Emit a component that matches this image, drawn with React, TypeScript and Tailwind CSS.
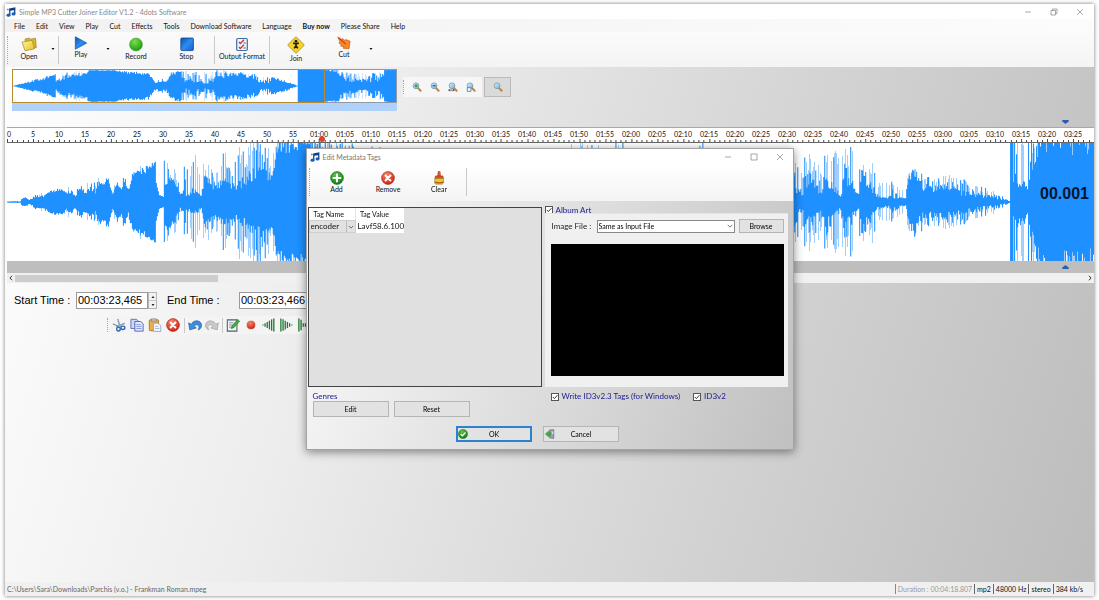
import React from "react";

const UI = "font-[Lato,'Noto_Sans',sans-serif]";
const ARIAL = "font-['Liberation_Sans',Arial,sans-serif]";

/* ---------- wave forms ---------- */

// [position, lowest body, highest body, chance of a peak, peak height], heights from 0 to 100
type Stop = [number, number, number, number, number];

const MAIN: Stop[] = [
  [0, 1, 1, 0, 1], [13, 1, 2, 0, 2], [15, 5, 8, 0, 8], [18, 6, 8, 0, 8], [22, 3, 5, 0.1, 6],
  [28, 7, 11, 0.4, 14], [36, 8, 13, 0.4, 18], [42, 15, 20, 0.2, 22], [55, 20, 24, 0.2, 25],
  [59, 10, 16, 0.5, 28], [63, 15, 22, 0.4, 30], [68, 8, 12, 0.4, 22], [74, 22, 30, 0.4, 36],
  [77, 12, 18, 0.4, 32], [83, 20, 26, 0.5, 38], [88, 14, 20, 0.4, 36], [93, 30, 40, 0.3, 43],
  [97, 26, 32, 0.4, 42], [101, 36, 42, 0.4, 46], [105, 10, 14, 0.2, 26], [110, 26, 34, 0.4, 44],
  [114, 20, 24, 0.4, 38], [117, 34, 42, 0.5, 52], [121, 15, 24, 0.3, 38], [125, 40, 50, 0.5, 56],
  [131, 46, 56, 0.7, 60], [140, 48, 62, 0.7, 64], [147, 64, 68, 0.5, 68], [148, 67, 69, 0, 69],
  [149, 30, 32, 0, 30], [152, 10, 12, 0, 14], [156, 8, 10, 0.1, 14], [157, 20, 50, 0.6, 76],
  [163, 36, 44, 0.6, 68], [168, 26, 36, 0.6, 66], [173, 9, 14, 0.3, 40], [176, 14, 20, 0.4, 60],
  [177, 40, 70, 0.9, 86], [179, 10, 14, 0.4, 50], [186, 12, 26, 0.6, 88], [190, 12, 20, 0.4, 76],
  [194, 8, 14, 0.3, 50], [198, 34, 56, 0.6, 84], [204, 20, 34, 0.5, 70], [211, 18, 36, 0.5, 66],
  [217, 26, 44, 0.7, 110], [224, 18, 32, 0.5, 66], [230, 20, 36, 0.6, 100], [238, 26, 46, 0.6, 84],
  [246, 36, 60, 0.6, 110], [256, 36, 60, 0.6, 110], [264, 36, 50, 0.6, 84], [268, 64, 90, 0.7, 110],
  [274, 80, 110, 0.7, 120], [300, 90, 110, 0.6, 120], [345, 70, 100, 0.5, 100], [350, 40, 70, 0.4, 97],
  [420, 30, 80, 0.2, 90], [560, 30, 80, 0.2, 90], [568, 40, 90, 0.5, 104], [630, 50, 90, 0.3, 104],
  [634, 40, 80, 0.2, 90], [714, 40, 80, 0.4, 104], [738, 40, 80, 0.2, 90], [780, 20, 40, 0.5, 84],
  [786, 20, 46, 0.6, 84], [796, 8, 16, 0.4, 54], [799, 24, 60, 0.7, 94], [808, 22, 44, 0.6, 80],
  [814, 10, 16, 0.4, 54], [818, 26, 64, 0.6, 88], [826, 16, 36, 0.6, 100], [834, 8, 16, 0.4, 70],
  [838, 30, 66, 0.6, 92], [846, 16, 36, 0.6, 94], [852, 8, 14, 0.4, 54], [856, 30, 60, 0.6, 78],
  [866, 12, 30, 0.6, 72], [870, 8, 16, 0.4, 38], [880, 5, 8, 0.4, 38], [886, 6, 22, 0.5, 48],
  [894, 5, 8, 0.3, 28], [899, 5, 8, 0.5, 36], [902, 24, 52, 0.6, 62], [908, 40, 60, 0.4, 60],
  [914, 18, 40, 0.6, 56], [922, 15, 30, 0.6, 52], [940, 14, 30, 0.6, 47], [958, 10, 22, 0.6, 38],
  [975, 7, 16, 0.6, 28], [990, 4, 9, 0.5, 17], [1003, 1, 2, 0.1, 3], [1004, 100, 100, 0, 100],
  [1006, 100, 100, 0, 100], [1007, 22, 50, 0.7, 130], [1016, 20, 40, 0.6, 130], [1021, 18, 36, 0.6, 130],
  [1024, 40, 70, 0.6, 130], [1031, 70, 140, 0.7, 150], [1046, 90, 180, 0.8, 170], [1066, 70, 160, 0.8, 170],
  [1087, 80, 160, 0.8, 170],
];

const OVERVIEW: Stop[] = [
  [0, 1, 2, 0, 2], [14, 18, 26, 0.2, 28], [30, 34, 56, 0.3, 58], [42, 68, 74, 0.2, 74],
  [43, 20, 40, 0.5, 74], [48, 36, 62, 0.6, 84], [62, 44, 80, 0.6, 100], [74, 70, 84, 0.6, 100],
  [76, 94, 100, 0.3, 100], [100, 96, 100, 0.2, 100], [114, 76, 92, 0.4, 92], [136, 66, 86, 0.5, 86],
  [138, 30, 70, 0.4, 70], [142, 20, 34, 0.4, 50], [154, 20, 34, 0.5, 54], [158, 60, 88, 0.4, 96],
  [168, 80, 100, 0.4, 100], [171, 16, 56, 0.6, 98], [186, 12, 56, 0.6, 94], [202, 16, 46, 0.6, 90],
  [205, 46, 84, 0.6, 104], [222, 56, 86, 0.6, 104], [240, 50, 76, 0.6, 88], [248, 20, 50, 0.4, 64],
  [258, 14, 30, 0.4, 54], [260, 44, 60, 0.3, 62], [274, 20, 34, 0.3, 36], [286, 2, 3, 0, 3],
  [287, 100, 100, 0, 100], [312, 100, 100, 0.5, 100], [326, 80, 110, 0.6, 110], [334, 26, 56, 0.7, 90],
  [350, 22, 44, 0.7, 80], [372, 26, 60, 0.7, 90], [374, 96, 100, 0, 100], [385, 100, 100, 0, 100],
];

function buildWave(stops: Stop[], seed: number) {
  let state = seed;
  const rand = () => {
    state = (state * 1664525 + 1013904223) % 4294967296;
    return state / 4294967296;
  };
  const cap = (n: number) => Math.min(100, n);
  let body = "";
  let peaks = "";
  const last = stops[stops.length - 1][0];
  let i = 0;
  for (let x = 0; x <= last; x++) {
    while (i < stops.length - 2 && x >= stops[i + 1][0]) i++;
    const a = stops[i];
    const b = stops[i + 1];
    const t = Math.min(1, (x - a[0]) / (b[0] - a[0]));
    const mix = (n: 1 | 2 | 3 | 4) => a[n] + (b[n] - a[n]) * t;
    const solid = () => cap(mix(1) + (mix(2) - mix(1)) * rand());
    const up = solid();
    const down = solid();
    body += `M${x + 0.5} ${(100 - up).toFixed(1)}V${(100 + down).toFixed(1)}`;
    if (rand() < mix(3)) {
      const reach = 0.6 + 0.4 * rand();
      const p = cap(Math.max(up, mix(4) * reach));
      const q = cap(Math.max(down, mix(4) * (reach - 0.06 + 0.1 * rand())));
      const path = `M${x + 0.5} ${(100 - p).toFixed(1)}V${(100 + q).toFixed(1)}`;
      if (rand() < 0.38) body += path;
      else peaks += path;
    }
  }
  return { body, peaks, width: last + 1 };
}

const mainWave = buildWave(MAIN, 11);
const overviewWave = buildWave(OVERVIEW, 5);

function Wave({ wave, className }: { wave: typeof mainWave; className: string }) {
  return (
    <svg viewBox={`0 0 ${wave.width} 200`} preserveAspectRatio="none" className={className} shapeRendering="crispEdges" aria-hidden="true">
      <path d={wave.peaks} stroke="#84c1fc" strokeWidth="1" />
      <path d={wave.body} stroke="#1e90ff" strokeWidth="1.05" />
    </svg>
  );
}

/* ---------- icons ---------- */

const Defs = () => (
  <svg className="absolute size-0" aria-hidden="true">
    <defs>
      <linearGradient id="blue" x1="0" y1="0" x2="1" y2="1">
        <stop offset="0" stopColor="#0d4fb0" />
        <stop offset=".5" stopColor="#2f8cf0" />
        <stop offset="1" stopColor="#1160c8" />
      </linearGradient>
      <radialGradient id="green" cx=".4" cy=".3" r=".7">
        <stop offset="0" stopColor="#7be04a" />
        <stop offset="1" stopColor="#1f9a14" />
      </radialGradient>
      <radialGradient id="darkgreen" cx=".4" cy=".25" r=".8">
        <stop offset="0" stopColor="#5cc44c" />
        <stop offset="1" stopColor="#0b7a12" />
      </radialGradient>
      <radialGradient id="red" cx=".4" cy=".25" r=".8">
        <stop offset="0" stopColor="#f7866a" />
        <stop offset="1" stopColor="#cc1f10" />
      </radialGradient>
      <linearGradient id="yellow" x1="0" y1="0" x2="1" y2="1">
        <stop offset="0" stopColor="#fff6a0" />
        <stop offset="1" stopColor="#e8c020" />
      </linearGradient>
      <linearGradient id="lens" x1="0" y1="0" x2="1" y2="1">
        <stop offset="0" stopColor="#e4f5fc" />
        <stop offset="1" stopColor="#64b0dc" />
      </linearGradient>
    </defs>
  </svg>
);

function Icon({ className = "size-[14px]", children }: { className?: string; children: React.ReactNode }) {
  return (
    <svg viewBox="0 0 16 16" className={`${className} shrink-0`} fill="none" aria-hidden="true">
      {children}
    </svg>
  );
}

const NoteIcon = () => (
  <Icon className="size-[10px]">
    <path d="M5 2.5 15 .5v10.5h-2V5L7 6v7H5z" fill="#123f86" />
    <ellipse cx="4" cy="13" rx="3.2" ry="2.6" fill="#1d5fb8" />
    <ellipse cx="12" cy="11" rx="3.2" ry="2.6" fill="#1d5fb8" />
    <circle cx="3" cy="4" r="1.6" fill="#4aa0e8" />
  </Icon>
);
const FolderIcon = () => (
  <Icon className="size-[16px]">
    <path d="M4 3 8.500 2l1 1.200 5-1 .8 9.300-10 2.500z" fill="#d9b52c" stroke="#8d741c" strokeWidth=".6" />
    <path d="m1 6 10-1.600 2.500 8.400L4 14.800z" fill="url(#yellow)" stroke="#a58a20" strokeWidth=".7" />
  </Icon>
);
const PlayIcon = () => (
  <Icon>
    <path d="M1.5.8 14.5 8 1.5 15.2z" fill="url(#blue)" stroke="#0b4499" strokeWidth=".7" />
  </Icon>
);
const RecordIcon = () => (
  <Icon className="size-[16px]"><circle cx="8" cy="8.5" r="6.5" fill="url(#green)" stroke="#3c9a2b" strokeWidth=".5" /></Icon>
);
const StopIcon = () => (
  <Icon className="size-[16px]"><rect x="1.8" y="2" width="12.6" height="12.6" rx="1" fill="url(#blue)" stroke="#0b4499" strokeWidth=".8" /></Icon>
);
const FormatIcon = () => (
  <Icon className="size-[16px]">
    <rect x="2.7" y="2.5" width="10.6" height="12" rx="1.2" fill="#eef4fb" stroke="#3b6ea8" strokeWidth="1.2" />
    <path d="m5 6 1.3 1.4L10 3.800M5 11l1.300 1.400L10 8.800" stroke="#d0342a" strokeWidth="1.400" />
    <path d="M9.500 7h2.300M9.500 12h2.300" stroke="#56688c" />
  </Icon>
);
const JoinIcon = () => (
  <Icon className="size-[18px]">
    <rect x="2.700" y="2.700" width="10.600" height="10.600" rx="1" transform="rotate(45 8 8)" fill="#f7d329" stroke="#9c8312" strokeWidth=".6" />
    <circle cx="8" cy="4.600" r="1.200" fill="#222" />
    <path d="M5.400 6.600h5.200M8 6v2.600L6.400 11M8 8.600 9.600 11" stroke="#222" strokeWidth="1.500" />
  </Icon>
);
const CutIcon = () => (
  <Icon>
    <path d="m.8 1 4.400 3L6 2.800l3.200 2.400L10 4l5 2-1.200 8.500L7 14l1-1.800-4-.7 1.200-1.600L2 8l1.600-1z" fill="#f7882a" stroke="#c94f12" strokeWidth=".7" />
    <path d="m2 2.200 8 7" stroke="#c43a1a" strokeWidth="1.200" />
  </Icon>
);
function ZoomIcon({ mark }: { mark?: React.ReactNode }) {
  return (
    <Icon className="size-[10px]">
      <path d="m9.200 9.200 4.600 4.800" stroke="#c8843c" strokeWidth="3.200" strokeLinecap="round" />
      <circle cx="6.400" cy="6" r="4.600" fill="url(#lens)" stroke="#7f97aa" strokeWidth="1.300" />
      {mark}
    </Icon>
  );
}
const ScissorsIcon = () => (
  <Icon>
    <path d="M6.500 1 9 9.500M14.500 6 5 10.200" stroke="#8fa2b4" strokeWidth="1.800" />
    <path d="M1 6.500 8 10" stroke="#7d8b99" strokeWidth="1.400" />
    <ellipse cx="7.400" cy="12.600" rx="2" ry="2.200" stroke="#2868b8" strokeWidth="1.600" />
    <ellipse cx="12.400" cy="11.200" rx="2.300" ry="1.900" stroke="#2868b8" strokeWidth="1.600" />
  </Icon>
);
const CopyIcon = () => (
  <Icon>
    <path d="M1 1.500h6.500l2.500 2.500v8H1z" fill="#ccd6f8" stroke="#5b6cb0" />
    <path d="M5.500 4h6.800L15 6.700V15H5.500z" fill="#e2e8fd" stroke="#4a5ca8" />
    <path d="M7.200 7.500h5M7.200 9.700h6M7.200 12h6" stroke="#7c92d8" />
  </Icon>
);
const PasteIcon = () => (
  <Icon>
    <rect x="1.500" y="2" width="10.500" height="12.500" rx="1" fill="#eab04c" stroke="#a8741c" />
    <rect x="4" y="1" width="5.400" height="2.600" fill="#b9bec8" stroke="#777" strokeWidth=".6" />
    <path d="M6.200 6h5.600l2.800 2.700v6.600H6.200z" fill="#f4f7ff" stroke="#8090b8" strokeWidth=".8" />
    <path d="M8 9.500h4M8 12h5" stroke="#a0b0d8" />
  </Icon>
);
const RemoveIcon = ({ className }: { className?: string }) => (
  <Icon className={className}>
    <circle cx="8" cy="8" r="7.300" fill="url(#red)" stroke="#a01a10" strokeWidth=".7" />
    <path d="m5.200 5.200 5.600 5.600m0-5.600-5.600 5.600" stroke="#fff" strokeWidth="2.200" strokeLinecap="round" />
  </Icon>
);
const AddIcon = () => (
  <Icon>
    <circle cx="8" cy="8" r="7.300" fill="url(#darkgreen)" stroke="#0a6410" strokeWidth=".7" />
    <path d="M8 4v8M4 8h8" stroke="#fff" strokeWidth="2.400" strokeLinecap="round" />
  </Icon>
);
const BrushIcon = () => (
  <Icon>
    <path d="M7 .6h2.200l.6 5H6.400z" fill="#e0603a" stroke="#a83c20" strokeWidth=".6" />
    <path d="M4 5.600h8.400l.8 3H3.200z" fill="#d94f2c" stroke="#98341c" strokeWidth=".6" />
    <path d="M3.200 8.600h10v5l-1.600 1.400H4L3 13.600z" fill="#efc52e" stroke="#a17a14" strokeWidth=".7" />
    <path d="M3.400 12.600c3 1.200 6.600 1.200 9.600 0" stroke="#a4581c" strokeWidth="1.300" />
  </Icon>
);
const UndoArrow = ({ color, edge }: { color: string; edge: string }) => (
  <path d="M.8 5.500 2 13.500l7.500-2.200-2.300-1.600c1.200-2.700 4.700-2.500 5.300.1.300 1.500-.2 2.700-1 3.800 2.800-.9 4.300-3.200 3.900-6C14.600 2.600 7 1.200 3.600 7.300z" fill={color} stroke={edge} strokeWidth=".8" />
);
const EditIcon = () => (
  <Icon>
    <path d="M1.500 2h11v13h-11z" fill="#f2f4f8" stroke="#535c6c" strokeWidth="1.200" />
    <path d="M3.500 5.500h5M3.500 8h4M3.500 10.500h3M1.500 2.500h11" stroke="#7a869c" />
    <path d="m6 12 1-3.200 6.400-7L15.600 3.800 9 11z" fill="#3fae3a" stroke="#1c7420" strokeWidth=".7" />
  </Icon>
);
const Bars = ({ heights }: { heights: number[] }) => (
  <Icon>
    {heights.map((h, i) => (
      <path key={i} d={`M${i * 2.5 + 1} ${8 - h}V${8 + h}`} stroke="#1f7a34" strokeWidth="1.500" />
    ))}
  </Icon>
);
const OkIcon = () => (
  <Icon className="size-[10px]">
    <circle cx="8" cy="8" r="7.300" fill="url(#darkgreen)" stroke="#0a6410" strokeWidth=".7" />
    <path d="m4.200 8.200 2.800 2.800 5-5.400" stroke="#fff" strokeWidth="2.200" />
  </Icon>
);
const ExitIcon = () => (
  <Icon className="size-[10px]">
    <path d="M7 1.500 14 1v14l-7-1z" fill="#9aa0b4" stroke="#585e72" />
    <path d="M11 4h2.500v4H11z" fill="#d4d8e4" />
    <path d="M.5 8 5.500 3.500V6H9v4H5.500v2.500z" fill="#37b53a" stroke="#1a7c20" strokeWidth=".6" />
  </Icon>
);

/* ---------- small parts ---------- */

const Sep = ({ className = "h-[30px]" }: { className?: string }) => <span className={`w-px shrink-0 bg-[#c9c9c9] ${className}`} />;
const Grip = ({ className }: { className: string }) => (
  <span className={`w-0 shrink-0 border-l border-dotted border-[#a8a8a8] ${className}`} />
);

function ToolButton({ icon, label, className }: { icon: React.ReactNode; label: string; className: string }) {
  return (
    <button type="button" className={`flex shrink-0 flex-col items-center whitespace-nowrap text-[7px] leading-[9px] text-[#111] ${className}`}>
      {icon}
      {label}
    </button>
  );
}

function DropArrow({ label }: { label: string }) {
  return (
    <button type="button" aria-label={label} className="flex h-[26px] w-[10px] shrink-0 items-center justify-center">
      <svg viewBox="0 0 6 4" className="h-[2px] w-[4px]" aria-hidden="true"><path d="M0 0h6L3 4z" fill="#111" /></svg>
    </button>
  );
}

function WindowControls({ restore, className }: { restore?: boolean; className: string }) {
  return (
    <div className={`ml-auto flex items-center text-[#8a8a8a] ${className}`}>
      <button type="button" aria-label="Minimize"><Icon className="size-[8px]"><path d="M2 8h12" stroke="currentColor" strokeWidth="1.500" /></Icon></button>
      <button type="button" aria-label={restore ? "Restore" : "Maximize"}>
        <Icon className="size-[8px]">
          {restore ? <path d="M2 5h9v9H2zM5 5V2h9v9h-3" stroke="currentColor" strokeWidth="1.500" /> : <path d="M2 2h12v12H2z" stroke="currentColor" strokeWidth="1.500" />}
        </Icon>
      </button>
      <button type="button" aria-label="Close"><Icon className="size-[8px]"><path d="m2 2 12 12M14 2 2 14" stroke="currentColor" strokeWidth="1.500" /></Icon></button>
    </div>
  );
}

function Check({ id, label }: { id: string; label: string }) {
  return (
    <span className="flex items-center gap-[3px]">
      <span className="grid size-[8px] place-items-center">
        <input id={id} type="checkbox" defaultChecked className="col-start-1 row-start-1 size-[8px] appearance-none border border-[#555] bg-white" />
        <svg viewBox="0 0 8 8" className="pointer-events-none col-start-1 row-start-1 size-[8px]" fill="none" aria-hidden="true"><path d="M1.800 4 3.400 5.600 6.400 2.200" stroke="#222" strokeWidth=".9" /></svg>
      </span>
      <label htmlFor={id} className="text-[8px] leading-[9px] whitespace-nowrap text-[#1a1a8c]">{label}</label>
    </span>
  );
}

function TimeField({ id, label, value, className }: { id: string; label: string; value: string; className: string }) {
  return (
    <div className={`flex items-center ${className}`}>
      <label htmlFor={id} className="flex-1 whitespace-nowrap">{label}</label>
      <input id={id} defaultValue={value} className="h-[17px] w-[72px] border border-[#9a9a9a] bg-white px-px text-[11px] outline-none" />
      <span className="flex h-[17px] w-[9px] flex-col border border-[#b4b4b4] bg-[#f2f2f2]">
        {["Increase", "Decrease"].map((name) => (
          <button key={name} type="button" aria-label={`${name} ${label}`} className="flex flex-1 items-center justify-center border-b border-[#c8c8c8] last:border-b-0">
            <svg viewBox="0 0 6 4" className="h-[2px] w-[4px]" aria-hidden="true"><path d={name === "Increase" ? "M0 4h6L3 0z" : "M0 0h6L3 4z"} fill="#222" /></svg>
          </button>
        ))}
      </span>
    </div>
  );
}

const PushButton = ({ children, className = "h-[16px] w-[76px]" }: { children: React.ReactNode; className?: string }) => (
  <button type="button" className={`flex shrink-0 items-center justify-center border border-[#b5b5b5] bg-[#e2e2e2] text-[7px] leading-[10px] text-black ${className}`}>{children}</button>
);

/* ---------- sections ---------- */

const MENU = ["File", "Edit", "View", "Play", "Cut", "Effects", "Tools", "Download Software", "Language", "Buy now", "Please Share", "Help"];

function MainToolbar() {
  return (
    <div className="flex h-[35px] items-start bg-gradient-to-b from-[#fbfbfb] to-[#f4f4f4] pt-[4px] pl-[2px]">
      <Grip className="h-[28px]" />
      <ToolButton icon={<FolderIcon />} label="Open" className="ml-[2px] w-[38px]" />
      <DropArrow label="Open recent" />
      <Sep className="h-[28px]" />
      <ToolButton icon={<PlayIcon />} label="Play" className="w-[44px]" />
      <DropArrow label="Play options" />
      <ToolButton icon={<RecordIcon />} label="Record" className="w-[46px]" />
      <ToolButton icon={<StopIcon />} label="Stop" className="w-[55px]" />
      <Sep className="h-[28px]" />
      <ToolButton icon={<FormatIcon />} label="Output Format" className="w-[54px]" />
      <Sep className="h-[28px]" />
      <ToolButton icon={<JoinIcon />} label="Join" className="w-[52px]" />
      <ToolButton icon={<CutIcon />} label="Cut" className="w-[44px]" />
      <DropArrow label="Cut options" />
    </div>
  );
}

function OverviewRow() {
  return (
    <div className="flex h-[60px] items-start pt-[2px] pl-[7px]">
      <div className="w-[385px] shrink-0">
        <div className="relative flex h-[34px] border border-[#8f9aa6] bg-white">
          <Wave wave={overviewWave} className="h-full w-full" />
          <span className="absolute -top-px -bottom-px -left-px w-[313px] border border-[#b98b2c]" />
        </div>
        <div className="h-[8px] bg-[#b0d1f9]" />
      </div>
      <div className="mt-[8px] ml-[6px] flex items-center">
        <div className="flex h-[20px] items-center gap-[8px] bg-[#f6f6f6] pr-[6px]">
          <Grip className="h-[14px]" />
          <button type="button" aria-label="Zoom in"><ZoomIcon mark={<path d="M6.400 3.600v4.800M4 6h4.800" stroke="#1e9030" strokeWidth="1.800" />} /></button>
          <button type="button" aria-label="Zoom out"><ZoomIcon mark={<path d="M4 6h4.800" stroke="#2b4a80" strokeWidth="1.800" />} /></button>
          <button type="button" aria-label="Zoom to selection"><ZoomIcon mark={<path d="M1 13h9M3 11l-2 2 2 2M8 11l2 2-2 2" stroke="#333" strokeWidth="1.200" />} /></button>
          <button type="button" aria-label="Zoom to page"><ZoomIcon mark={<path d="M2 9h6v6H2z" fill="#e8f2fb" stroke="#3a78b8" strokeWidth="1.200" />} /></button>
        </div>
        <button type="button" aria-label="Zoom" className="ml-[2px] flex h-[20px] w-[27px] items-center justify-center border border-[#bababa] bg-[#dadada]"><ZoomIcon /></button>
      </div>
      <svg viewBox="0 0 8 5" className="mt-[51px] mr-[25px] ml-auto h-[4px] w-[7px]" aria-hidden="true"><path d="M0 0h8v2L4 5 0 2z" fill="#2a5db0" /></svg>
    </div>
  );
}

const SECONDS = Array.from({ length: 41 }, (_, i) => (i + 1) * 5);
const two = (n: number) => String(n).padStart(2, "0");

function Ruler() {
  return (
    <div className="relative h-[16px] border-t border-b border-t-[#a8a8a8] border-b-[#666] bg-white">
      <div className="flex text-[7px] leading-[13px] whitespace-nowrap text-[#111]">
        <span className="w-0 flex-[2.5]">0</span>
        {SECONDS.map((s) => (
          <span key={s} className="flex w-0 flex-[5] justify-center">{s < 60 ? s : `${two(Math.floor(s / 60))}:${two(s % 60)}`}</span>
        ))}
        <span className="w-0 flex-[1.5]" />
      </div>
      <svg viewBox="0 0 1088 3" preserveAspectRatio="none" className="absolute bottom-0 left-0 h-[3px] w-full" aria-hidden="true">
        {Array.from({ length: 209 }, (_, s) => (
          <path key={s} d={`M${Math.round(s * 5.205) + 0.5} ${s % 5 ? 1 : 0}V3`} stroke="#444" />
        ))}
      </svg>
      <span className="absolute bottom-0 left-[28.7%] size-[6px] rounded-full border border-[#c04a30] bg-[#e8402c]" />
    </div>
  );
}

function Editor() {
  return (
    <div className="pl-[2px]">
      <Ruler />
      <div className="relative h-[118px] bg-white">
        <Wave wave={mainWave} className="h-full w-full" />
        <span className={`absolute top-[41px] right-[5px] text-[16px] leading-[20px] font-bold text-[#06152c] ${ARIAL}`}>00.001</span>
      </div>
      <div className="flex h-[12px] items-center justify-end bg-[#bebebe] pr-[25px]">
        <svg viewBox="0 0 8 5" className="h-[4px] w-[7px]" aria-hidden="true"><path d="M0 5h8V3L4 0 0 3z" fill="#2a5db0" /></svg>
      </div>
      <div className="flex h-[10px] items-center bg-[#f0f0f0]">
        <button type="button" aria-label="Scroll left" className="flex w-[8px] justify-center"><Icon className="size-[6px]"><path d="m11 2-6 6 6 6" stroke="#222" strokeWidth="2.500" /></Icon></button>
        <div className="flex-1"><div className="h-[7px] w-[19%] bg-[#cdcdcd]" /></div>
        <button type="button" aria-label="Scroll right" className="flex w-[8px] justify-center"><Icon className="size-[6px]"><path d="m5 2 6 6-6 6" stroke="#222" strokeWidth="2.500" /></Icon></button>
      </div>
    </div>
  );
}

function EditToolbar() {
  const tool = (label: string, icon: React.ReactNode) => <button type="button" aria-label={label}>{icon}</button>;
  return (
    <div className="mt-[7px] ml-[102px] flex h-[18px] w-[240px] items-center gap-[4px] bg-[#f4f4f4]">
      <Grip className="h-[14px]" />
      {tool("Cut", <ScissorsIcon />)}
      {tool("Copy", <CopyIcon />)}
      {tool("Paste", <PasteIcon />)}
      {tool("Delete", <RemoveIcon />)}
      <span className="flex items-center gap-[3px]">
        <Sep className="h-[15px]" />
        {tool("Undo", <Icon><UndoArrow color="#3b8ede" edge="#1c5aa6" /></Icon>)}
        {tool("Redo", <Icon><g transform="matrix(-1 0 0 1 16 0)"><UndoArrow color="#c8c8c8" edge="#a0a0a0" /></g></Icon>)}
        <Sep className="h-[15px]" />
        {tool("Edit tags", <EditIcon />)}
      </span>
      {tool("Record", <Icon><circle cx="8" cy="8" r="4.600" fill="url(#red)" stroke="#c04030" strokeWidth=".5" /></Icon>)}
      {tool("Fade in", <Bars heights={[0.6, 2, 3.500, 5, 6.500, 7.500]} />)}
      {tool("Fade out", <Bars heights={[7.500, 6.500, 5, 3.500, 2, 0.6]} />)}
      {tool("Mute", <Bars heights={[7.500, 6, 2, 2, 6, 7.500]} />)}
    </div>
  );
}

function StatusBar() {
  return (
    <footer className="flex h-[14px] items-center bg-[#f0f0f0] px-[2px] text-[7px] leading-[10px] whitespace-nowrap text-[#111]">
      <span className="mr-auto text-[#666]">C:\Users\Sara\Downloads\Parchis (v.o.) - Frankman Roman.mpeg</span>
      <span className="border-l border-[#888] px-[2px] text-[#999]">Duration : 00:04:18.807</span>
      {["mp2", "48000 Hz", "stereo", "384 kb/s"].map((t) => (
        <span key={t} className="border-l border-[#666] px-[2px] last:pr-[9px]">{t}</span>
      ))}
    </footer>
  );
}

function TagDialog() {
  return (
    <div role="dialog" aria-label="Edit Metadata Tags" className={`flex w-[488px] flex-col border border-[#a4a4a4] bg-[linear-gradient(112deg,#f8f8f8_10%,#c0c0c0)] shadow-[0_2px_9px_rgba(0,0,0,0.45)] ${UI}`}>
      <header className="flex h-[15px] items-center gap-[3px] bg-white pr-[9px] pl-[3px] text-[7px] leading-[10px] text-[#777]">
        <NoteIcon />
        Edit Metadata Tags
        <WindowControls className="gap-[18px]" />
      </header>
      <div className="flex h-[37px] items-start bg-gradient-to-b from-white to-[#f4f4f4] pt-[4px] pl-[2px]">
        <Grip className="h-[28px]" />
        <div className="flex pt-[3px] pl-px">
          <ToolButton icon={<AddIcon />} label="Add" className="w-[52px]" />
          <ToolButton icon={<RemoveIcon />} label="Remove" className="w-[51px]" />
          <ToolButton icon={<BrushIcon />} label="Clear" className="w-[51px]" />
        </div>
        <Sep className="ml-px h-[28px]" />
      </div>

      <div className="flex gap-[3px] pt-[6px] pr-[5px] pl-px">
        <div className="h-[180px] w-[234px] shrink-0 border border-[#444] bg-[#e0e0e0]">
          <table className="border-collapse bg-white text-left text-[#111]">
            <thead>
              <tr className="h-[12px] text-[7px] leading-[11px]">
                <th className="w-[47px] border-r border-[#e4e4e4] pl-[5px] font-normal">Tag Name</th>
                <th className="w-[46px] pl-[4px] font-normal">Tag Value</th>
              </tr>
            </thead>
            <tbody className="text-[8px] leading-[11px]">
              <tr className="h-[13px]">
                <td className="bg-[#e2e2e2] p-0">
                  <span className="flex items-center border border-[#cfcfcf]">
                    <select aria-label="Tag name" className="w-0 flex-1 appearance-none pl-px outline-none"><option>encoder</option></select>
                    <span className="flex h-[11px] w-[9px] items-center justify-center border-l border-[#bbb]">
                      <Icon className="size-[6px]"><path d="m2 5 6 6 6-6" stroke="#444" strokeWidth="2" /></Icon>
                    </span>
                  </span>
                </td>
                <td className="p-0 pl-[2px]">Lavf58.6.100</td>
              </tr>
            </tbody>
          </table>
        </div>

        <fieldset className="flex min-w-0 flex-1 flex-col">
          <div className="flex h-[6px] items-center"><Check id="album-art" label="Album Art" /></div>
          <div className="flex flex-1 flex-col border-t border-[#e4e4e4] bg-[#f0f0f0] pr-[4px] pl-[6px]">
            <div className="flex items-center pt-[5px]">
              <label htmlFor="image-file" className="w-[46px] pl-px text-[8px] leading-[10px] whitespace-nowrap text-[#222]">Image File :</label>
              <span className="flex h-[13px] flex-1 items-center border border-[#888] bg-white pr-px">
                <select id="image-file" className="w-0 flex-1 appearance-none pl-px text-[7px] leading-[10px] text-black outline-none"><option>Same as Input File</option></select>
                <Icon className="size-[6px]"><path d="m2 5 6 6 6-6" stroke="#444" strokeWidth="2" /></Icon>
              </span>
              <PushButton className="ml-[4px] h-[14px] w-[45px]">Browse</PushButton>
            </div>
            <div className="mt-[11px] h-[132px] bg-black" />
          </div>
        </fieldset>
      </div>

      <div className="flex items-start">
        <div className="w-[243px] pt-[5px] pl-[6px]">
          <div className="text-[8px] leading-[9px] text-[#1a1a8c]">Genres</div>
          <div className="flex gap-[5px]"><PushButton>Edit</PushButton><PushButton>Reset</PushButton></div>
        </div>
        <div className="flex gap-[13px] pt-[5px] pl-px">
          <Check id="write-id3" label="Write ID3v2.3 Tags (for Windows)" />
          <Check id="id3v2" label="ID3v2" />
        </div>
      </div>
      <div className="flex gap-[11px] pt-[9px] pb-[7px] pl-[149px]">
        <button type="button" className="flex h-[16px] w-[76px] items-center border-2 border-[#2b82cf] bg-[#e2e2e2] text-[7px] leading-[10px]">
          <OkIcon /><span className="flex-1 pr-[9px] text-center">OK</span>
        </button>
        <button type="button" className="flex h-[16px] w-[76px] items-center border border-[#b5b5b5] bg-[#e2e2e2] px-px text-[7px] leading-[10px]">
          <ExitIcon /><span className="flex-1 pr-[9px] text-center">Cancel</span>
        </button>
      </div>
    </div>
  );
}

export default function App() {
  return (
    <div className={`flex min-h-screen flex-col bg-white px-[5px] py-[4px] ${UI}`}>
      <Defs />
      <div className="flex flex-1 flex-col bg-[linear-gradient(108deg,#ffffff,#ededed_32%,#d2d2d2_68%,#bcbcbc)] shadow-[0_0_4px_rgba(0,0,0,0.55)]">
        <header className="flex h-[15px] items-center gap-[3px] bg-white pr-[10px] pl-px text-[7px] leading-[10px] text-[#888]">
          <NoteIcon />
          Simple MP3 Cutter Joiner Editor V1.2 - 4dots Software
          <WindowControls restore className="gap-[18px]" />
        </header>
        <nav className="flex h-[13px] items-center gap-[11px] bg-gradient-to-r from-[#f1f1f1] to-[#fcfcfc] pl-[9px] text-[7px] leading-[10px] text-[#111]">
          {MENU.map((m) => (
            <button key={m} type="button" className={m === "Buy now" ? "font-bold whitespace-nowrap" : "whitespace-nowrap"}>{m}</button>
          ))}
        </nav>
        <MainToolbar />
        <OverviewRow />
        <Editor />
        <div className={`mt-[9px] flex text-[11px] leading-[17px] text-black ${ARIAL}`}>
          <TimeField id="start" label="Start Time :" value="00:03:23,465" className="ml-[9px] w-[143px]" />
          <TimeField id="end" label="End Time :" value="00:03:23,466" className="ml-[10px] w-[153px]" />
        </div>
        <EditToolbar />
        <div className="flex-1" />
        <StatusBar />
      </div>
      <div className="pointer-events-none fixed inset-0 grid place-items-center pb-[2px]">
        <div className="pointer-events-auto"><TagDialog /></div>
      </div>
    </div>
  );
}
